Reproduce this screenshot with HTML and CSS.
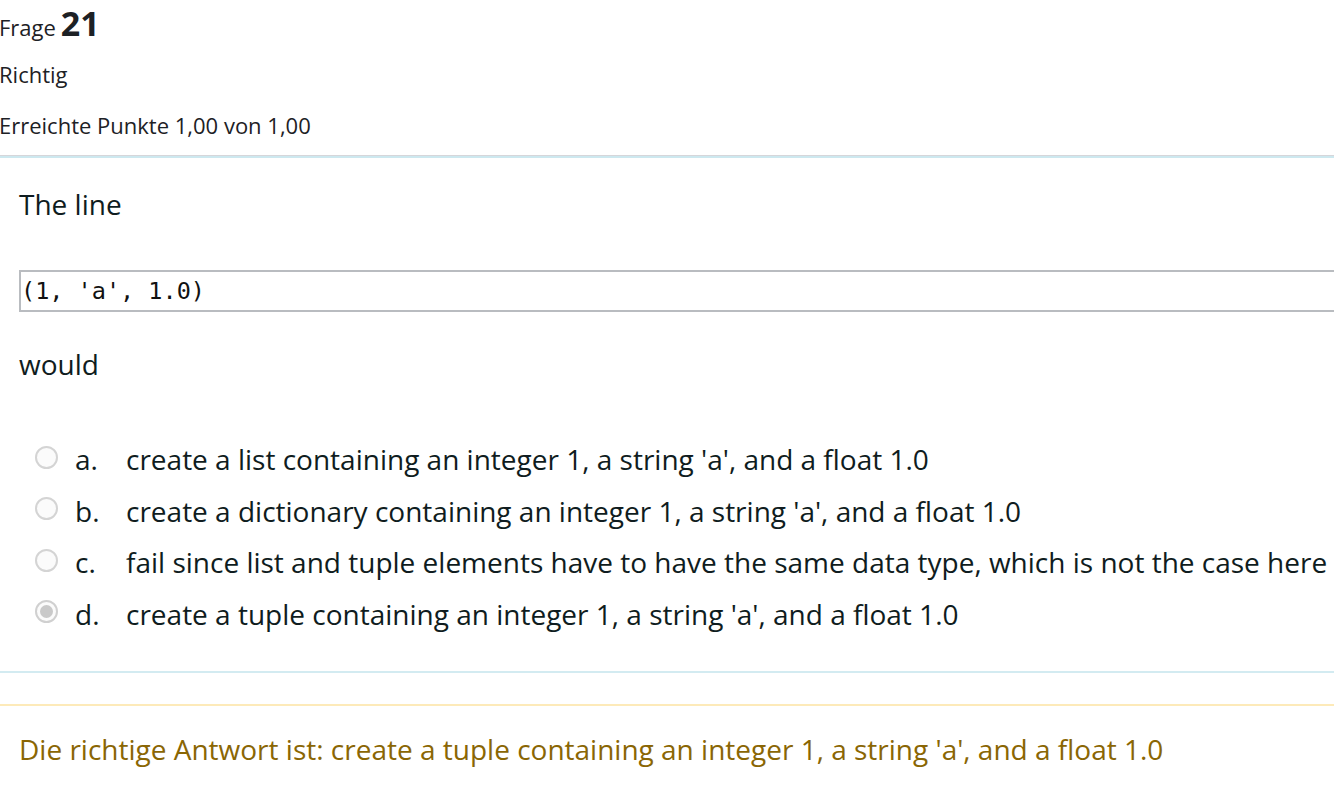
FILE: index.html
```html
<!DOCTYPE html>
<html lang="de">
<head>
<meta charset="utf-8">
<title>Frage 21</title>
<link rel="stylesheet" href="styles.css">
</head>
<body>
<div class="que">
  <div class="info">
    <h3 class="no"><span class="qlabel">Frage</span> <span class="qno">21</span></h3>
    <div class="state">Richtig</div>
    <div class="grade">Erreichte Punkte 1,00 von 1,00</div>
  </div>
  <div class="formulation">
    <p class="qtext">The line</p>
    <pre class="code">(1, 'a', 1.0)</pre>
    <p class="qtext would">would</p>
    <div class="answers">
      <div class="opt"><span class="radio"></span><span class="letter">a.</span><span class="atext">create a list containing an integer 1, a string 'a', and a float 1.0</span></div>
      <div class="opt"><span class="radio"></span><span class="letter">b.</span><span class="atext">create a dictionary containing an integer 1, a string 'a', and a float 1.0</span></div>
      <div class="opt"><span class="radio"></span><span class="letter">c.</span><span class="atext">fail since list and tuple elements have to have the same data type, which is not the case here</span></div>
      <div class="opt"><span class="radio checked"></span><span class="letter">d.</span><span class="atext">create a tuple containing an integer 1, a string 'a', and a float 1.0</span></div>
    </div>
  </div>
  <div class="outcome">
    <div class="rightanswer">Die richtige Antwort ist: create a tuple containing an integer 1, a string 'a', and a float 1.0</div>
  </div>
</div>
</body>
</html>
```
FILE: styles.css
```css
html, body {
  margin: 0;
  padding: 0;
  background: #ffffff;
}
body {
  font-family: "Open Sans", "Noto Sans", sans-serif;
  color: #1d2125;
  overflow: hidden;
}
.que {
  width: 1340px;
  margin-left: -1px;
}
.info {
  padding-top: 3px;
  height: 152px;
  box-sizing: border-box;
}
.no {
  margin: 0;
  font-weight: normal;
  line-height: 40px;
  height: 46px;
}
.qlabel {
  font-size: 22px;
}
.qno {
  font-size: 34px;
  font-weight: 700;
}
.state, .grade {
  font-size: 22px;
  line-height: 51px;
  height: 51px;
}
.formulation {
  border-top: 1px solid #d6d6da;
  box-shadow: inset 0 1px 0 #cde8ef, inset 0 2px 0 #cde8ef;
  border-bottom: 2px solid #d3ebf1;
  margin-top: 3px;
  padding: 28px 0 37px 20px;
  color: #0f1c20;
}
.qtext {
  margin: 0;
  font-size: 28px;
  line-height: 40px;
}
.code {
  margin: 46px 0 0 0;
  height: 38px;
  box-sizing: content-box;
  border: 2px solid #b9bcc0;
  padding: 0 0 0 0;
  font-family: "DejaVu Sans Mono", "Liberation Mono", monospace;
  font-size: 23.5px;
  line-height: 38px;
  color: #111;
}
.would {
  margin-top: 32px;
}
.answers {
  margin-top: 55px;
  display: flex;
  flex-direction: column;
  gap: 11px;
}
.opt {
  display: flex;
  align-items: center;
  height: 40.5px;
  font-size: 28px;
  line-height: 40px;
}
.radio {
  width: 19px;
  height: 19px;
  border: 2px solid #d4d4d4;
  border-radius: 50%;
  margin-left: 16px;
  margin-right: 17px;
  margin-top: -4px;
  box-sizing: content-box;
  background: #fbfbfb;
  position: relative;
  flex: none;
}
.radio.checked {
  border-color: #d0d0d0;
}
.radio.checked::after {
  content: "";
  position: absolute;
  left: 3px;
  top: 3px;
  width: 13px;
  height: 13px;
  border-radius: 50%;
  background: #c9c9c9;
}
.letter {
  width: 51px;
  flex: none;
}
.atext {
  white-space: nowrap;
}
.outcome {
  margin-top: 31px;
  border-top: 2px solid #fdeab9;
  padding: 23px 0 0 20px;
}
.rightanswer {
  color: #8a6604;
  font-size: 28px;
  line-height: 40px;
  white-space: nowrap;
}
```
